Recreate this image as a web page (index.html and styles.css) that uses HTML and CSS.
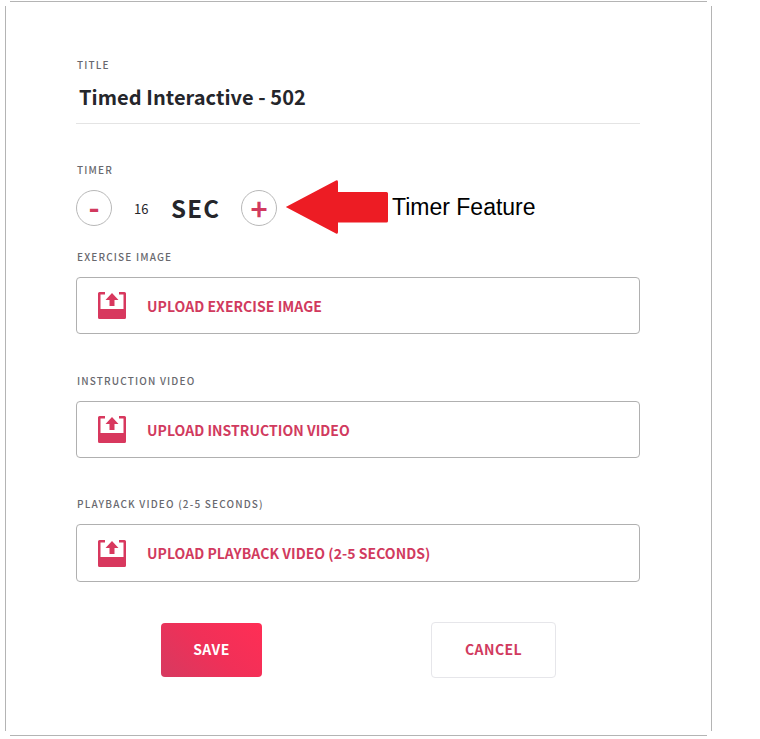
FILE: index.html
```html
<!DOCTYPE html>
<html lang="en">
<head>
<meta charset="utf-8">
<title>Timed Interactive</title>
<link rel="stylesheet" href="styles.css">
</head>
<body>
<main class="card">
  <section class="title-field">
    <div class="label">TITLE</div>
    <div class="title-value">Timed Interactive - 502</div>
  </section>
  <section class="timer-field">
    <div class="label">TIMER</div>
    <div class="timer-row">
      <button class="round minus">-</button>
      <span class="count">16</span>
      <span class="unit">SEC</span>
      <button class="round plus">+</button>
    </div>
    <svg class="arrow" width="103" height="54" viewBox="0 0 103 54"><path d="M0.800 27 L51 0.500 Q53 -0.500 53 2 L53 12 L101.500 12 Q103 12 103 13.500 L103 41 Q103 42.500 101.500 42.500 L53 42.500 L53 52 Q53 54.500 51 53.500 Z" fill="#ed1c24"/></svg>
    <span class="note">Timer Feature</span>
  </section>
  <section class="upload-field first">
    <div class="label">EXERCISE IMAGE</div>
    <div class="upload-box">
      <svg class="upload-icon" width="28" height="27" viewBox="0 0 28 27"><path fill-rule="evenodd" d="M1.500 0 H7 V2.500 H2.500 V17 H25.500 V2.500 H21 V0 H26.500 Q28 0 28 1.500 V25.500 Q28 27 26.500 27 H1.500 Q0 27 0 25.500 V1.500 Q0 0 1.500 0 Z" fill="#d8385e"/><path d="M14 1 L20.500 8 H16.500 V14 H11.500 V8 H7.500 Z" fill="#d8385e"/></svg>
      <span>UPLOAD EXERCISE IMAGE</span>
    </div>
  </section>
  <section class="upload-field">
    <div class="label">INSTRUCTION VIDEO</div>
    <div class="upload-box">
      <svg class="upload-icon" width="28" height="27" viewBox="0 0 28 27"><path fill-rule="evenodd" d="M1.500 0 H7 V2.500 H2.500 V17 H25.500 V2.500 H21 V0 H26.500 Q28 0 28 1.500 V25.500 Q28 27 26.500 27 H1.500 Q0 27 0 25.500 V1.500 Q0 0 1.500 0 Z" fill="#d8385e"/><path d="M14 1 L20.500 8 H16.500 V14 H11.500 V8 H7.500 Z" fill="#d8385e"/></svg>
      <span>UPLOAD INSTRUCTION VIDEO</span>
    </div>
  </section>
  <section class="upload-field">
    <div class="label">PLAYBACK VIDEO (2-5 SECONDS)</div>
    <div class="upload-box tall">
      <svg class="upload-icon" width="28" height="27" viewBox="0 0 28 27"><path fill-rule="evenodd" d="M1.500 0 H7 V2.500 H2.500 V17 H25.500 V2.500 H21 V0 H26.500 Q28 0 28 1.500 V25.500 Q28 27 26.500 27 H1.500 Q0 27 0 25.500 V1.500 Q0 0 1.500 0 Z" fill="#d8385e"/><path d="M14 1 L20.500 8 H16.500 V14 H11.500 V8 H7.500 Z" fill="#d8385e"/></svg>
      <span>UPLOAD PLAYBACK VIDEO (2-5 SECONDS)</span>
    </div>
  </section>
  <div class="actions">
    <button class="save">SAVE</button>
    <button class="cancel">CANCEL</button>
  </div>
</main>
</body>
</html>
```

FILE: styles.css
```css
* { box-sizing: border-box; }
html, body { margin: 0; padding: 0; background: #fff; }
body {
  width: 760px;
  height: 739px;
  overflow: hidden;
  font-family: "Noto Sans CJK SC", "Noto Sans", sans-serif;
}
.card {
  margin: 1px 0 0 5px;
  width: 707px;
  height: 735px;
  padding: 57px 72px 0 71px;
  background:
    linear-gradient(#b4b4b4, #b4b4b4) center top / calc(100% - 10px) 1px no-repeat,
    linear-gradient(#b4b4b4, #b4b4b4) center bottom / calc(100% - 10px) 1px no-repeat,
    linear-gradient(#b4b4b4, #b4b4b4) left center / 1px calc(100% - 10px) no-repeat,
    linear-gradient(#b4b4b4, #b4b4b4) right center / 1px calc(100% - 10px) no-repeat;
}
.label {
  padding-left: 1px;
  font-size: 10px;
  line-height: 14px;
  font-weight: 500;
  letter-spacing: 1.17px;
  color: #68686e;
}
.title-field {
  height: 66px;
  border-bottom: 1px solid #e4e4e4;
}
.title-value {
  margin: 9px 0 0 3px;
  font-size: 20px;
  line-height: 32px;
  font-weight: 700;
  letter-spacing: .06px;
  color: #25262b;
}
.timer-field {
  position: relative;
  margin-top: 39px;
  height: 62px;
}
.timer-row {
  display: flex;
  align-items: center;
  height: 36px;
  margin-top: 13px;
}
.round {
  width: 36px;
  height: 36px;
  padding: 0;
  border: 1px solid #b8b8b8;
  border-radius: 50%;
  background: #fff;
  color: #d13a5e;
  font-family: inherit;
  line-height: 30px;
  font-weight: 700;
}
.minus { font-size: 30px; padding-bottom: 5px; }
.plus { font-size: 29px; padding-bottom: 3px; }
.count {
  margin-left: 22px;
  width: 37px;
  font-size: 13px;
  font-weight: 400;
  color: #25262b;
}
.unit {
  width: 70px;
  padding-bottom: 2px;
  font-size: 24px;
  font-weight: 700;
  letter-spacing: 1.2px;
  color: #25262b;
}
.arrow {
  position: absolute;
  left: 209px;
  top: 17px;
}
.note {
  position: absolute;
  left: 316px;
  top: 30px;
  font-family: "Liberation Sans", sans-serif;
  font-size: 23px;
  line-height: 28px;
  color: #000;
  white-space: nowrap;
}
.upload-field { height: 124px; }
.upload-field.first { margin-top: 25px; }
.upload-field + .upload-field { height: 123px; }
.upload-field .label { margin-bottom: 13px; }
.upload-box {
  display: flex;
  align-items: center;
  height: 57px;
  border: 1px solid #b0b0b0;
  border-radius: 4px;
  padding-left: 21px;
  gap: 21px;
  font-size: 14px;
  letter-spacing: .04px;
  font-weight: 700;
  color: #d13a5e;
}
.upload-box.tall { height: 58px; }
.upload-icon { flex: none; }
.actions {
  display: flex;
  align-items: center;
  margin: 2px 0 0 85px;
}
.save, .cancel {
  font-family: inherit;
  font-weight: 700;
  border-radius: 4px;
  padding: 0 0 2px;
}
.save {
  width: 101px;
  height: 54px;
  border: 0;
  background: linear-gradient(45deg, #d63a60 0%, #f03058 50%, #ff2e55 100%);
  color: #fff;
  font-size: 14px;
  letter-spacing: .5px;
}
.cancel {
  margin-left: 169px;
  width: 125px;
  height: 56px;
  border: 1px solid #e6e6ea;
  background: #fff;
  color: #d13a5e;
  font-size: 14px;
  letter-spacing: .4px;
}
```
